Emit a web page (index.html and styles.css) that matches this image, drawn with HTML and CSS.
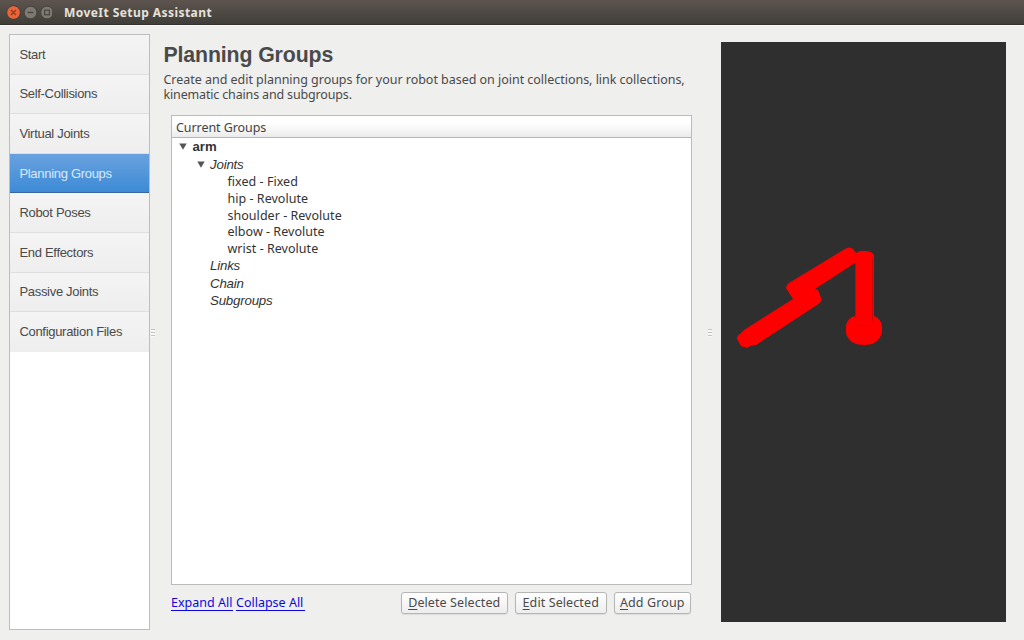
FILE: index.html
```html
<!DOCTYPE html>
<html lang="en">
<head>
<meta charset="utf-8">
<title>MoveIt Setup Assistant</title>
<link rel="stylesheet" href="styles.css">
</head>
<body>
<header class="titlebar">
  <svg class="controls" width="46" height="16" viewBox="0 0 46 16">
    <circle cx="7.5" cy="7.5" r="6.8" fill="#ed6336" stroke="#3c3b37" stroke-width=".8"/>
    <path d="M5 5l5 5m0-5l-5 5" stroke="#8a4024" stroke-width="1.4"/>
    <circle cx="24.5" cy="7.5" r="6.3" fill="#7e7a72" stroke="#3c3b37" stroke-width=".8"/>
    <path d="M21.7 7.5h5.6" stroke="#45433d" stroke-width="1.4"/>
    <circle cx="41" cy="7.5" r="6.3" fill="#7e7a72" stroke="#3c3b37" stroke-width=".8"/>
    <rect x="38.6" y="5.2" width="4.8" height="4.6" fill="none" stroke="#45433d" stroke-width="1.1"/>
  </svg>
  <h1 class="window-title">MoveIt Setup Assistant</h1>
</header>
<div class="window">
  <nav class="steps">
    <a class="step">Start</a>
    <a class="step">Self-Collisions</a>
    <a class="step">Virtual Joints</a>
    <a class="step active">Planning Groups</a>
    <a class="step">Robot Poses</a>
    <a class="step">End Effectors</a>
    <a class="step">Passive Joints</a>
    <a class="step">Configuration Files</a>
  </nav>
  <div class="splitter"><i class="grip"></i></div>
  <main class="content">
    <h2 class="heading">Planning Groups</h2>
    <p class="intro"><span class="line-one">Create and edit planning groups for your robot based on joint collections, link collections,</span><br><span class="line-two">kinematic chains and subgroups.</span></p>
    <section class="tree">
      <div class="tree-head"><span>Current Groups</span></div>
      <div class="row group"><svg class="arrow" width="8" height="7" viewBox="0 0 8 7"><path d="M.3.5h7.4L4 6.7z"/></svg>arm</div>
      <div class="row category open"><svg class="arrow" width="8" height="7" viewBox="0 0 8 7"><path d="M.3.5h7.4L4 6.7z"/></svg>Joints</div>
      <div class="row joint">fixed - Fixed</div>
      <div class="row joint">hip - Revolute</div>
      <div class="row joint">shoulder - Revolute</div>
      <div class="row joint">elbow - Revolute</div>
      <div class="row joint">wrist - Revolute</div>
      <div class="row category">Links</div>
      <div class="row category">Chain</div>
      <div class="row category">Subgroups</div>
    </section>
    <footer class="actions">
      <a class="link expand">Expand All</a>
      <a class="link collapse">Collapse All</a>
      <button class="button delete"><span><u>D</u>elete Selected</span></button>
      <button class="button edit"><span><u>E</u>dit Selected</span></button>
      <button class="button add"><span><u>A</u>dd Group</span></button>
    </footer>
  </main>
  <div class="splitter right"><i class="grip"></i></div>
  <svg class="viewport" width="285" height="580" viewBox="721 42 285 580">
    <g fill="#fe0000">
      <path d="M786 288Q786 285 789 283L845 249Q849 246 853 249L856 253Q860 250 865 251Q872 251 874 255V316Q881 319 882 326V332Q879 345 864 345Q849 345 846 333V325Q848 318 855 316V263L815 289L818 290L821.500 299Q821 303 817 305L756 345L750 346L747 348L741 346L737 339Q737 335 740 334L744 330L793 299Z"/>
    </g>
    <path d="M855.5 264V318M872.500 257V322" stroke="#c80606" stroke-width="1" fill="none"/>
    <path d="M856 325Q864 328 873 325" stroke="#ee0000" stroke-width="1" fill="none"/>
  </svg>
</div>
</body>
</html>
```
FILE: styles.css
```css
* { box-sizing: border-box; }
body {
  margin: 0;
  width: 1024px;
  height: 640px;
  overflow: hidden;
  background: #efefee;
  color: #4a4a4a;
  font: 13px/17px "Noto Sans", sans-serif;
}
.titlebar {
  height: 25px;
  display: flex;
  align-items: center;
  padding: 1px 6px 0 6px;
  background: linear-gradient(#5d544f, #403e39);
  border-bottom: 1px solid #33322e;
}
.controls { flex: none; }
.window-title {
  margin: 1px 0 0 12px;
  color: #e6e2da;
  font: bold 12px/16px "Noto Sans", sans-serif;
  letter-spacing: .44px;
  white-space: nowrap;
}
.window {
  height: 615px;
  display: flex;
  border-top: 1px solid #faf9f6;
}
.steps {
  width: 141px;
  height: 596px;
  margin: 8px 0 0 9px;
  flex: none;
  background: #fff;
  border: 1px solid #bdbdbd;
}
.step {
  display: flex;
  align-items: center;
  height: 39.6px;
  padding: 1px 0 0 9.4px;
  border-bottom: 1px solid #dedede;
  background: linear-gradient(#f4f4f4, #eee);
  font: 13px/16px "Liberation Sans", sans-serif;
  letter-spacing: -.3px;
}
.step:last-child { border-bottom-color: #eee; }
.step.active {
  background: linear-gradient(#69a1df, #3d8bd5);
  border-bottom-color: #3b65a0;
  color: #d9eafb;
}
.splitter {
  width: 13.5px;
  flex: none;
  padding: 295px 0 0 1px;
}
.splitter.right { width: 21px; padding-left: 8px; }
.grip {
  display: block;
  width: 4px;
  height: 8px;
  margin-top: 8px;
  background: repeating-linear-gradient(#c4c4c4 0 1px, #f8f8f8 1px 3px);
}
.content { width: 536.5px; flex: none; padding: 16px 8px 0 0; }
.heading {
  margin: 0;
  font: bold 21.3px/26px "Liberation Sans", sans-serif;
  letter-spacing: -.13px;
}
.intro {
  margin: 4px 0 0;
  font-size: 12.5px;
  line-height: 15px;
  white-space: nowrap;
}
.line-one { letter-spacing: -.03px; }
.line-two { letter-spacing: -.16px; }
.tree {
  width: 520.5px;
  height: 470px;
  margin: 13px 0 0 7.5px;
  background: #fff;
  border: 1px solid #bbb;
  color: #333;
}
.tree-head {
  height: 22px;
  padding: 3px 0 0 4px;
  background: linear-gradient(#fefefe 0 35%, #f6f6f6 65%, #ebebeb);
  border-bottom: 1px solid #b6b6b6;
  font-size: 12.5px;
  line-height: 18px;
  letter-spacing: -.07px;
  color: #444;
}
.row {
  display: flex;
  align-items: center;
  height: 17.5px;
  white-space: nowrap;
}
.group { padding-left: 7px; font: bold 13.2px/17px "Liberation Sans", sans-serif; }
.category { padding-left: 38px; font: italic 13.3px/17px "Liberation Sans", sans-serif; letter-spacing: -.2px; }
.category.open { padding-left: 24.5px; }
.arrow { fill: #555; margin-right: 5.5px; }
.joint { height: 16.8px; padding-left: 55.5px; font-size: 12.5px; letter-spacing: .03px; }
.actions {
  display: flex;
  margin: 6.5px 0 0 7.5px;
  height: 24px;
  font-size: 12.5px;
}
.link {
  align-self: flex-start;
  margin: 2px 3px 0 0;
  height: 17px;
  color: #0e06e0;
  line-height: 17px;
  border-bottom: 1px solid #0e06e0;
  white-space: nowrap;
}
.expand { width: 62px; }
.collapse { width: 69px; }
.button {
  height: 22.5px;
  margin: 0 0 0 7px;
  padding: 0;
  border: 1px solid #b5b5b5;
  border-radius: 3px;
  background: linear-gradient(#fff, #ededed);
  box-shadow: 0 1px 1px #ddd;
  color: #4a4a4a;
  font: 12.5px/18px "Noto Sans", sans-serif;
  white-space: nowrap;
}
.button span { letter-spacing: .1px; }
.button u { text-underline-offset: 2px; }
.delete { width: 107.5px; margin-left: auto; }
.edit { width: 91.5px; }
.add { width: 77.5px; margin-right: 1px; }
.viewport {
  flex: none;
  margin-top: 16px;
  background: #2f2f2f;
}
```
